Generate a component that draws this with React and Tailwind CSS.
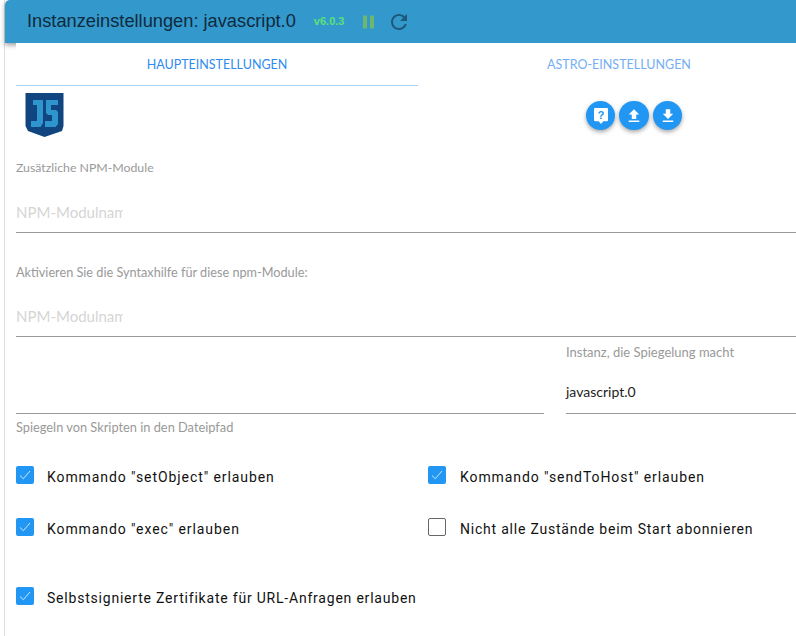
const ui = "font-['Lato','Liberation_Sans',sans-serif]";

const JsLogo = () => (
    <svg width="40" height="45" viewBox="0 0 40 45" className="block">
        <path d="M0.5 0H38.5V33L37 38L19.5 44L3 38L0.5 33Z" fill="#11457f" />
        <path d="M8 7H18V30L15.5 34H6V28H12V12H8Z" fill="#2f95cf" />
        <path d="M21 7H33V12H26V17H31L33 19V31L30.5 34H20V28H27V22H23L21 20Z" fill="#2f95cf" />
    </svg>
);

const HelpIcon = () => (
    <svg width="14" height="16" viewBox="0 0 15 17">
        <path d="M1 0H14C14.5 0 15 .5 15 1V13C15 13.5 14.5 14 14 14H10L7.5 17L5 14H1C.5 14 0 13.5 0 13V1C0 .5 .5 0 1 0Z" fill="#fff" />
        <text x="7.5" y="11.5" textAnchor="middle" fontSize="12" fontWeight="700" fill="#2196f3" fontFamily="Liberation Sans">?</text>
    </svg>
);

const UploadIcon = () => (
    <svg width="18" height="18" viewBox="0 0 24 24" fill="#fff">
        <path d="M9 16v-6H5l7-7 7 7h-4v6H9zm-4 2h14v2H5v-2z" />
    </svg>
);

const DownloadIcon = () => (
    <svg width="18" height="18" viewBox="0 0 24 24" fill="#fff">
        <path d="M19 9h-4V3H9v6H5l7 7 7-7zM5 18v2h14v-2H5z" />
    </svg>
);

const RoundButton = ({ children, className = "" }) => (
    <button className={`w-[29px] h-[29px] rounded-full bg-[#2196f3] flex items-center justify-center shadow-[0_2px_4px_rgba(0,0,0,0.35)] ${className}`}>
        {children}
    </button>
);

const Check = ({ label, checked = true, className = "ml-[13px] tracking-[0.92px]" }) => (
    <div className="flex items-start h-[18px]">
        {checked ? (
            <div className="w-[18px] h-[18px] rounded-[2px] bg-[#2196f3] flex items-center justify-center shrink-0">
                <svg width="12" height="10" viewBox="0 0 12 10" fill="none">
                    <path d="M1 5.5L4.3 8.7L11 1" stroke="#fff" strokeWidth="0.9" opacity="0.85" />
                </svg>
            </div>
        ) : (
            <div className="w-[18px] h-[18px] rounded-[2px] border border-[#666] shrink-0" />
        )}
        <span className={`mt-[2px] text-[14px] leading-[18px] text-[#111] font-['Roboto',sans-serif] whitespace-nowrap ${className}`}>
            {label}
        </span>
    </div>
);

const App = () => {
    return (
        <div className={`w-[796px] h-[636px] overflow-hidden bg-white ${ui}`}>
            <div className="ml-[4px] h-[636px] border-l border-[#ddd]">

                {/* HEADER */}
                <div className="h-[43px] bg-[#3399cc] rounded-tl-[5px] flex items-center pl-[22px] shadow-[0_2px_5px_rgba(0,0,0,0.4)]">
                    <h1 className="text-[18.25px] leading-[40px] text-[#0f2a3d] font-['Liberation_Sans',sans-serif] mb-[2px]">
                        Instanzeinstellungen: javascript.0
                    </h1>
                    <span className="ml-[18px] text-[11px] font-bold text-[#5be07a] font-['Liberation_Sans',sans-serif]">v6.0.3</span>
                    <svg width="14" height="14" viewBox="0 0 14 14" className="ml-[17px]" fill="#6cb86c">
                        <path d="M2 0.5H6V13.5H2ZM9 0.5H13V13.5H9Z" />
                    </svg>
                    <svg width="24" height="24" viewBox="0 0 24 24" className="ml-[12px]" fill="#1c5a7c">
                        <path d="M17.65 6.35C16.2 4.9 14.21 4 12 4c-4.42 0-7.99 3.58-7.99 8s3.57 8 7.99 8c3.73 0 6.84-2.55 7.73-6h-2.08c-.82 2.33-3.04 4-5.65 4-3.31 0-6-2.69-6-6s2.69-6 6-6c1.66 0 3.14.69 4.22 1.78L13 11h7V4l-2.35 2.35z" />
                    </svg>
                </div>

                {/* CONTENT */}
                <div className="relative z-10 ml-[11px] w-[804px] bg-white h-[593px]">

                    {/* TABS */}
                    <div className="flex h-[43px]">
                        <div className="w-[402px] h-[43px] border-b border-[#a9d3f2] text-center text-[12.5px] leading-[44px] text-[#2f8bf0]">
                            HAUPTEINSTELLUNGEN
                        </div>
                        <div className="w-[402px] h-[43px] text-center text-[12.5px] leading-[44px] text-[#74aef5]">
                            ASTRO-EINSTELLUNGEN
                        </div>
                    </div>

                    {/* LOGO AND ACTIONS */}
                    <div className="flex h-[73px]">
                        <div className="w-[402px] pl-[9px] pt-[7px]">
                            <JsLogo />
                        </div>
                        <div className="w-[402px] pt-[15px] pl-[168px] flex items-start">
                            <RoundButton><HelpIcon /></RoundButton>
                            <RoundButton className="ml-[4px] w-[30px]"><UploadIcon /></RoundButton>
                            <RoundButton className="ml-[4px]"><DownloadIcon /></RoundButton>
                        </div>
                    </div>

                    {/* NPM MODULES */}
                    <div className="h-[104px]">
                        <p className="text-[12.3px] leading-[18px] text-[#999]">Zusätzliche NPM-Module</p>
                        <div className="mt-[24px] h-[32px] border-b border-[#999]">
                            <input placeholder="NPM-Modulname" className="block w-[107px] h-[22px] text-[15px] outline-none placeholder:text-[#d5d5d5]" />
                        </div>
                    </div>

                    <div className="h-[74px]">
                        <p className="text-[12.7px] leading-[18px] text-[#999]">Aktivieren Sie die Syntaxhilfe für diese npm-Module:</p>
                        <div className="mt-[24px] h-[32px] border-b border-[#999]">
                            <input placeholder="NPM-Modulname" className="block w-[107px] h-[22px] text-[15px] outline-none placeholder:text-[#d5d5d5]" />
                        </div>
                    </div>

                    {/* MIRROR */}
                    <div className="flex gap-[22px] h-[99px]">
                        <div className="w-[528px]">
                            <div className="h-[77px] border-b border-[#999]" />
                            <p className="mt-[4px] text-[12.8px] leading-[18px] text-[#999]">Spiegeln von Skripten in den Dateipfad</p>
                        </div>
                        <div className="flex-1">
                            <p className="mt-[6px] text-[13px] leading-[18px] text-[#999]">Instanz, die Spiegelung macht</p>
                            <div className="mt-[21px] h-[32px] border-b border-[#999] text-[14px] leading-[20px] text-[#222]">
                                javascript.0
                            </div>
                        </div>
                    </div>

                    {/* CHECKBOXES */}
                    <div className="flex mt-[30px]">
                        <div className="w-[412px]">
                            <Check label={'Kommando "setObject" erlauben'} />
                            <div className="mt-[34px]"><Check label={'Kommando "exec" erlauben'} /></div>
                        </div>
                        <div>
                            <Check label={'Kommando "sendToHost" erlauben'} className="ml-[14px] tracking-[0.92px]" />
                            <div className="mt-[34px]">
                                <Check label="Nicht alle Zustände beim Start abonnieren" checked={false} className="ml-[14px] tracking-[0.78px]" />
                            </div>
                        </div>
                    </div>
                    <div className="mt-[51px]">
                        <Check label="Selbstsignierte Zertifikate für URL-Anfragen erlauben" className="ml-[13px] tracking-[0.79px]" />
                    </div>
                </div>
            </div>
        </div>
    );
};

export default App;
